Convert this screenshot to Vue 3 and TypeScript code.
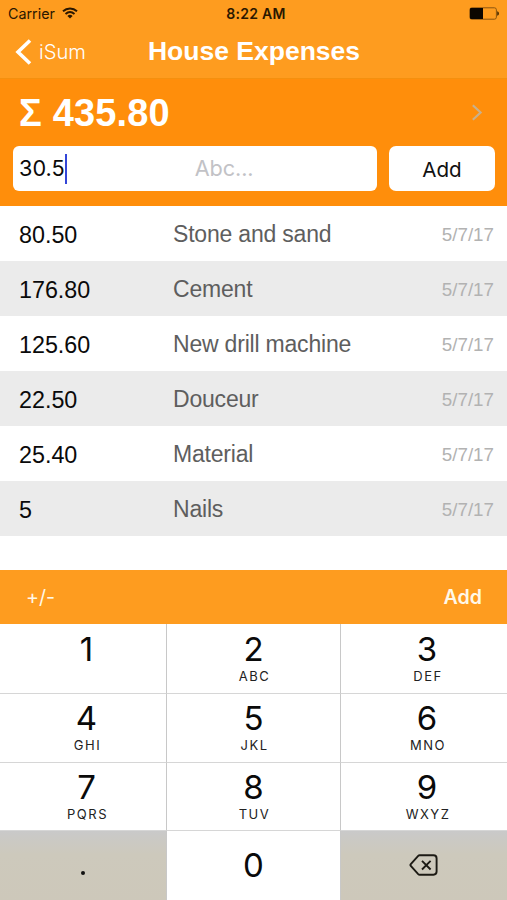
<script setup lang="ts">
interface Expense {
  amount: string
  label: string
  date: string
}

interface Key {
  digit: string
  letters: string
}

const expenses: Expense[] = [
  { amount: '80.50', label: 'Stone and sand', date: '5/7/17' },
  { amount: '176.80', label: 'Cement', date: '5/7/17' },
  { amount: '125.60', label: 'New drill machine', date: '5/7/17' },
  { amount: '22.50', label: 'Douceur', date: '5/7/17' },
  { amount: '25.40', label: 'Material', date: '5/7/17' },
  { amount: '5', label: 'Nails', date: '5/7/17' },
]

const keys: Key[] = [
  { digit: '1', letters: '' },
  { digit: '2', letters: 'ABC' },
  { digit: '3', letters: 'DEF' },
  { digit: '4', letters: 'GHI' },
  { digit: '5', letters: 'JKL' },
  { digit: '6', letters: 'MNO' },
  { digit: '7', letters: 'PQRS' },
  { digit: '8', letters: 'TUV' },
  { digit: '9', letters: 'WXYZ' },
]
</script>

<template>
  <main class="screen">
    <header class="top">
      <div class="status">
        <div class="carrier">
          <span>Carrier</span>
          <svg class="wifi" width="16" height="12" viewBox="0 0 16 12" fill="none" stroke="#2a1700" stroke-width="1.9">
            <path d="M1 4.3C5 .6 11 .6 15 4.3" />
            <path d="M3.5 7C6.2 4.6 9.8 4.6 12.5 7" />
            <path d="M5.4 8.9C7 7.5 9 7.5 10.6 8.9L8 11.6Z" fill="#2a1700" stroke="none" />
          </svg>
        </div>
        <span class="clock">8:22 AM</span>
        <svg class="battery" width="31" height="13" viewBox="0 0 31 13">
          <rect x=".8" y=".8" width="26.6" height="11.4" rx="2" fill="none" stroke="#8a5510" />
          <path d="M2 1H14V12H2Q1 12 1 11V2Q1 1 2 1Z" fill="#0c0600" />
          <path d="M28.2 4.2Q30 4.8 30 6.5T28.2 8.8Z" fill="#4a2b00" />
        </svg>
      </div>
      <nav class="nav">
        <div class="back">
          <svg width="17" height="26" viewBox="0 0 17 26" fill="none" stroke="#fff" stroke-width="3.6">
            <path d="M15 1.5L3 13L15 24.5" />
          </svg>
          <span>iSum</span>
        </div>
        <h1 class="title">House Expenses</h1>
      </nav>
    </header>

    <section class="summary">
      <div class="total">
        <span class="sum">Σ 435.80</span>
        <svg width="12" height="17" viewBox="0 0 12 17" fill="none" stroke="#c9b08c" stroke-width="2.2">
          <path d="M1.8 1.2L9.6 8.5L1.8 15.8" />
        </svg>
      </div>
      <div class="entry">
        <div class="field">
          <span class="value">30.5</span>
          <i class="caret"></i>
          <span class="hint">Abc...</span>
        </div>
        <button class="add">Add</button>
      </div>
    </section>

    <ul class="list">
      <li v-for="item in expenses" :key="item.label" class="row">
        <span class="amount">{{ item.amount }}</span>
        <span class="label">{{ item.label }}</span>
        <span class="date">{{ item.date }}</span>
      </li>
    </ul>

    <div class="toolbar">
      <span class="sign">+/-</span>
      <span class="confirm">Add</span>
    </div>

    <section class="pad">
      <div v-for="key in keys" :key="key.digit" class="key">
        <span class="digit">{{ key.digit }}</span>
        <span class="letters">{{ key.letters }}</span>
      </div>
      <div class="key dark"><i class="dot"></i></div>
      <div class="key zero"><span class="digit">0</span></div>
      <div class="key dark erase">
        <svg width="29" height="22" viewBox="0 0 29 22" fill="none" stroke="#1c1a14" stroke-width="1.9">
          <path d="M10.7 1.3H24.5Q27.6 1.3 27.6 4.4V17.6Q27.6 20.7 24.5 20.7H10.7Q9.8 20.7 9.2 20.1L1.8 12Q1 11 1.8 10L9.2 1.9Q9.8 1.3 10.7 1.3Z" />
          <path d="M13 6.9L21.6 15.5M21.6 6.9L13 15.5" />
        </svg>
      </div>
    </section>
  </main>
</template>

<style>
body {
  margin: 0;
  background: #fff;
}
</style>

<style scoped>
.screen {
  width: 507px;
  height: 900px;
  display: flex;
  flex-direction: column;
  overflow: hidden;
  background: #fff;
  color: #0a0a0a;
  font-family: "Liberation Sans", Arial, sans-serif;
  white-space: nowrap;
}
.top {
  height: 79px;
  box-sizing: border-box;
  background: #fe9c1f;
  border-bottom: 1px solid #f4900f;
}
.status {
  height: 27px;
  display: grid;
  grid-template-columns: 1fr auto 1fr;
  align-items: center;
  padding: 0 7px 0 8px;
  font: 400 14.3px/27px Inter, sans-serif;
  color: #2a1700;
}
.carrier {
  display: flex;
  align-items: center;
  gap: 7px;
}
.wifi {
  margin-bottom: 2px;
}
.clock {
  padding-left: 4px;
  font-weight: 600;
  font-size: 14px;
  letter-spacing: 0.3px;
}
.battery {
  justify-self: end;
}
.nav {
  height: 51px;
  display: grid;
  grid-template-columns: 1fr auto 1fr;
  align-items: center;
  padding: 0 15px;
  color: #fff;
}
.back {
  display: flex;
  align-items: center;
  gap: 7px;
  padding-bottom: 1px;
  font: 300 20.2px/50px Inter, sans-serif;
}
.title {
  margin: 0;
  font-size: 26.5px;
  line-height: 47px;
  font-weight: 700;
  padding: 0 0 3px 1px;
}
.summary {
  height: 127px;
  box-sizing: border-box;
  padding: 0 12px 0 13px;
  background: #ff8e0b;
}
.total {
  height: 67px;
  display: flex;
  align-items: center;
  justify-content: space-between;
  padding: 0 12px 0 6px;
}
.sum {
  color: #fff;
  font-size: 38px;
  font-weight: 700;
  line-height: 67px;
  padding-top: 2px;
  letter-spacing: 0.15px;
}
.entry {
  display: flex;
  gap: 12px;
  height: 45px;
}
.field {
  flex: 1;
  display: grid;
  grid-template-columns: auto 2px 1fr;
  align-items: center;
  padding-left: 6px;
  background: #fff;
  border-radius: 6px;
  font: 400 21.7px/45px Inter, sans-serif;
}
.caret {
  height: 30px;
  background: #3346d8;
}
.hint {
  padding-left: 128px;
  letter-spacing: -0.1px;
  color: #c2c2c6;
}
.add {
  width: 106px;
  padding: 1px 0 0;
  border: 0;
  border-radius: 7px;
  background: #fff;
  color: #111;
  font: 400 20.6px/45px Inter, sans-serif;
}
.list {
  flex: 1;
  margin: 0;
  padding: 0;
  list-style: none;
}
.row {
  height: 55px;
  display: grid;
  grid-template-columns: 154px 1fr auto;
  padding: 1px 13px 0 19px;
  box-sizing: border-box;
  line-height: 55px;
}
.row:nth-child(even) {
  background: #ebebeb;
}
.amount {
  padding-top: 1px;
  font-size: 23.3px;
}
.label {
  font-size: 23px;
  letter-spacing: -0.2px;
  color: #5e5e5e;
}
.date {
  font-size: 18.8px;
  color: #b2b2b2;
}
.toolbar {
  height: 54px;
  display: flex;
  justify-content: space-between;
  padding: 0 25px 0 26px;
  background: #fe9c1f;
  color: #fff8e8;
  font: 400 19.6px/54px Inter, sans-serif;
}
.confirm {
  font-weight: 600;
}
.pad {
  height: 276px;
  display: grid;
  grid-template-columns: 167px 174px 166px;
  grid-template-rows: 70px 69px 68px 69px;
}
.key {
  display: flex;
  flex-direction: column;
  align-items: center;
  box-sizing: border-box;
  border-right: 1px solid #c8c8c8;
  border-bottom: 1px solid #d6d6d6;
  padding: 5px 0 0 7px;
}
.key:nth-child(-n + 3) {
  padding-top: 6px;
}
.key:nth-child(3n + 2) {
  padding-left: 0;
}
.key:nth-child(3n) {
  border-right: 0;
  padding-left: 6px;
}
.digit {
  font: 400 33px/38px Inter, sans-serif;
}
.letters {
  font: 400 13px/16px Inter, sans-serif;
  letter-spacing: 1.5px;
  padding-left: 2px;
  color: #222;
}
.key.zero {
  border-bottom: 0;
  padding-top: 15px;
}
.key.dark {
  justify-content: center;
  border-bottom: 0;
  padding: 0;
  background: linear-gradient(#c9c9c9, #cdc9bc 34%, #cdc8ba);
}
.dot {
  width: 4px;
  height: 4px;
  border-radius: 50%;
  margin-top: 14px;
  background: #111;
}
.key.erase {
  padding: 0 2px 2px 0;
}
</style>
